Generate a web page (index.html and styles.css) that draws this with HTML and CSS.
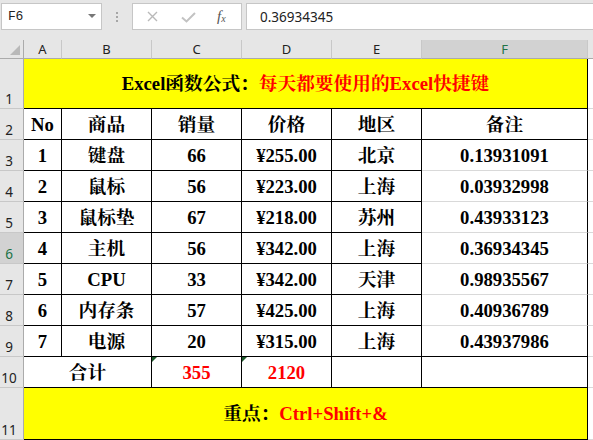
FILE: index.html
```html
<!DOCTYPE html>
<html lang="zh-CN">
<head>
<meta charset="utf-8">
<title>Excel</title>
<link rel="stylesheet" href="styles.css">
</head>
<body>
<div class="app">
  <div class="toolbar">
    <div class="namebox"><span class="name">F6</span><span class="caret"></span></div>
    <div class="dots"><span></span><span></span><span></span></div>
    <div class="fbtns">
      <svg class="ico-x" width="11" height="11" viewBox="0 0 11 11"><path d="M1 1 L10 10 M10 1 L1 10" stroke="#b9b9b9" stroke-width="1.4" fill="none"/></svg>
      <svg class="ico-ok" width="15" height="11" viewBox="0 0 15 11"><path d="M1 5.5 L5.5 9.5 L14 1" stroke="#c2c2c2" stroke-width="2" fill="none"/></svg>
      <span class="fx"><i>f</i><sub>x</sub></span>
    </div>
    <div class="formula">0.36934345</div>
  </div>

  <div class="sheet">
    <!-- column headers -->
    <div class="ch corner"><span class="corner-tri"></span></div>
    <div class="ch">A</div>
    <div class="ch">B</div>
    <div class="ch">C</div>
    <div class="ch">D</div>
    <div class="ch">E</div>
    <div class="ch sel">F</div>
    <div class="ch last"></div>

    <!-- row 1 -->
    <div class="rh">1</div>
    <div class="c title span6 bb br">Excel函数公式：<span class="red">每天都要使用的Excel快捷键</span></div>
    <div class="c x"></div>

    <!-- row 2 -->
    <div class="rh">2</div>
    <div class="c bb br">No</div>
    <div class="c bb br">商品</div>
    <div class="c bb br">销量</div>
    <div class="c bb br">价格</div>
    <div class="c bb br">地区</div>
    <div class="c bb br">备注</div>
    <div class="c x"></div>

    <!-- row 3 -->
    <div class="rh">3</div>
    <div class="c bb br">1</div>
    <div class="c bb br">键盘</div>
    <div class="c bb br">66</div>
    <div class="c bb br">¥255.00</div>
    <div class="c bb br">北京</div>
    <div class="c br">0.13931091</div>
    <div class="c x"></div>

    <!-- row 4 -->
    <div class="rh">4</div>
    <div class="c bb br">2</div>
    <div class="c bb br">鼠标</div>
    <div class="c bb br">56</div>
    <div class="c bb br">¥223.00</div>
    <div class="c bb br">上海</div>
    <div class="c br">0.03932998</div>
    <div class="c x"></div>

    <!-- row 5 -->
    <div class="rh">5</div>
    <div class="c bb br">3</div>
    <div class="c bb br">鼠标垫</div>
    <div class="c bb br">67</div>
    <div class="c bb br">¥218.00</div>
    <div class="c bb br">苏州</div>
    <div class="c br">0.43933123</div>
    <div class="c x"></div>

    <!-- row 6 -->
    <div class="rh sel">6</div>
    <div class="c bb br">4</div>
    <div class="c bb br">主机</div>
    <div class="c bb br">56</div>
    <div class="c bb br">¥342.00</div>
    <div class="c bb br">上海</div>
    <div class="c br">0.36934345</div>
    <div class="c x"></div>

    <!-- row 7 -->
    <div class="rh">7</div>
    <div class="c bb br">5</div>
    <div class="c bb br">CPU</div>
    <div class="c bb br">33</div>
    <div class="c bb br">¥342.00</div>
    <div class="c bb br">天津</div>
    <div class="c br">0.98935567</div>
    <div class="c x"></div>

    <!-- row 8 -->
    <div class="rh">8</div>
    <div class="c bb br">6</div>
    <div class="c bb br">内存条</div>
    <div class="c bb br">57</div>
    <div class="c bb br">¥425.00</div>
    <div class="c bb br">上海</div>
    <div class="c br">0.40936789</div>
    <div class="c x"></div>

    <!-- row 9 -->
    <div class="rh">9</div>
    <div class="c bb br">7</div>
    <div class="c bb br">电源</div>
    <div class="c bb br">20</div>
    <div class="c bb br">¥315.00</div>
    <div class="c bb br">上海</div>
    <div class="c bb br">0.43937986</div>
    <div class="c x"></div>

    <!-- row 10 -->
    <div class="rh">10</div>
    <div class="c span2 bb br">合计</div>
    <div class="c bb br red tri">355</div>
    <div class="c bb br red tri">2120</div>
    <div class="c bb br"></div>
    <div class="c bb br"></div>
    <div class="c x"></div>

    <!-- row 11 -->
    <div class="rh">11</div>
    <div class="c title span6 bb br">重点：<span class="red">Ctrl+Shift+&amp;</span></div>
    <div class="c x"></div>
  </div>
</div>
</body>
</html>
```

FILE: styles.css
```css
* { box-sizing: border-box; }

html, body {
  margin: 0;
  padding: 0;
  background: #e6e6e6;
}

.app {
  width: 593px;
  height: 440px;
  overflow: hidden;
  background: #e6e6e6;
}

/* ---------- toolbar ---------- */
.toolbar {
  height: 40px;
  display: flex;
  align-items: flex-start;
  padding-top: 3px;
}

.namebox {
  margin-left: 1px;
  width: 101px;
  height: 27px;
  background: #fff;
  border: 1px solid #c6c6c6;
  display: flex;
  align-items: center;
  justify-content: space-between;
  padding: 0 5px 0 6px;
}

.name {
  font-family: "Liberation Mono", "DejaVu Sans Mono", monospace;
  font-size: 13px;
  color: #222;
  letter-spacing: -0.3px;
}

.caret {
  width: 0;
  height: 0;
  border-left: 4px solid transparent;
  border-right: 4px solid transparent;
  border-top: 4px solid #777;
  margin-top: -2px;
}

.dots {
  width: 30px;
  height: 27px;
  display: flex;
  flex-direction: column;
  align-items: center;
  justify-content: center;
  gap: 2px;
}
.dots span {
  width: 2px;
  height: 2px;
  background: #a6a6a6;
}

.fbtns {
  width: 110px;
  height: 27px;
  background: #fff;
  border: 1px solid #c6c6c6;
  display: flex;
  align-items: center;
  padding-left: 14px;
}
.ico-x { margin-right: 23px; }
.ico-ok { margin-right: 21px; margin-top: 1px; }

.fx {
  font-family: "Liberation Serif", serif;
  color: #555;
  font-size: 15px;
  line-height: 1;
}
.fx i { font-style: italic; }
.fx sub {
  font-size: 10px;
  font-style: italic;
  vertical-align: -1px;
}

.formula {
  margin-left: 4px;
  flex: 1;
  height: 27px;
  background: #fff;
  border: 1px solid #c6c6c6;
  border-right: none;
  display: flex;
  align-items: center;
  padding-left: 13px;
  font-family: "Noto Sans", "Open Sans", sans-serif;
  font-size: 13.5px;
  color: #222;
}

/* ---------- sheet ---------- */
.sheet {
  display: grid;
  grid-template-columns: 24px 38px 90px 90px 90px 90px 166px 5px;
  grid-template-rows: 19px 50px repeat(9, 31px) 52px;
}

.ch {
  background: #e6e6e6;
  border-right: 1px solid #c8c8c8;
  border-bottom: 1px solid #ababab;
  font-family: "Noto Sans", "Open Sans", sans-serif;
  font-size: 13px;
  color: #222;
  display: flex;
  align-items: center;
  justify-content: center;
  line-height: 1;
  padding-top: 1px;
}
.ch.sel {
  background: #d2d2d2;
  color: #217346;
}
.ch.last { border-right: none; }
.ch.corner {
  position: relative;
  border-right: 1px solid #ababab;
}
.corner-tri {
  position: absolute;
  right: 3px;
  bottom: 3px;
  width: 0;
  height: 0;
  border-left: 10px solid transparent;
  border-bottom: 10px solid #b9b9b9;
}

.rh {
  background: #e6e6e6;
  border-right: 1px solid #ababab;
  border-bottom: 1px solid #c8c8c8;
  font-family: "Noto Sans", "Open Sans", sans-serif;
  font-size: 13.5px;
  color: #222;
  display: flex;
  align-items: flex-end;
  justify-content: center;
  padding-right: 5px;
  padding-bottom: 1px;
  line-height: 1.1;
}
.rh.sel {
  background: #d2d2d2;
  color: #217346;
}

.c {
  background: #fff;
  border-right: 1px solid #d9d9d9;
  border-bottom: 1px solid #d9d9d9;
  font-family: "Liberation Serif", "Noto Serif CJK SC", "Noto Sans CJK SC", serif;
  font-weight: bold;
  font-size: 18.7px;
  color: #000;
  display: flex;
  align-items: center;
  justify-content: center;
  white-space: nowrap;
  line-height: 1;
  padding-top: 2px;
}

.c.bb { border-bottom-color: #000; }
.c.br { border-right-color: #000; }
.c.x { border-right: none; }

.span6 { grid-column: span 6; }
.span2 { grid-column: span 2; }

.title {
  background: #ffff00;
  font-size: 18.7px;
}

.red { color: #ff0000; }

.tri { position: relative; }
.tri::before {
  content: "";
  position: absolute;
  left: 0;
  top: 0;
  width: 0;
  height: 0;
  border-top: 5px solid #1e5a2c;
  border-right: 5px solid transparent;
}
```
